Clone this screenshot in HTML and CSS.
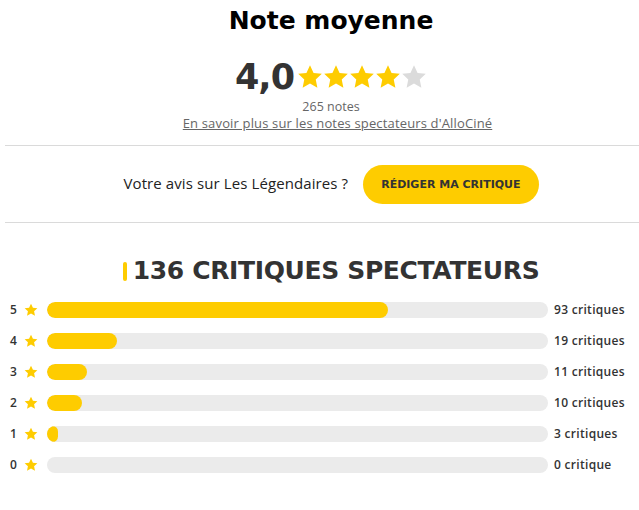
FILE: index.html
```html
<!DOCTYPE html>
<html lang="fr">
<head>
<meta charset="utf-8">
<link rel="stylesheet" href="styles.css">
</head>
<body>
<svg width="0" height="0" class="defs">
  <defs>
    <symbol id="star" viewBox="0 0 24 24"><path d="M12 1.2l3.3 7 7.6.9-5.6 5.2 1.5 7.6L12 18.1l-6.8 3.8 1.5-7.6L1.1 9.1l7.6-.9z"/></symbol>
  </defs>
</svg>
<main class="page">
  <section class="average">
    <h2 class="title">Note moyenne</h2>
    <div class="score">
      <span class="score-value">4,0</span>
      <span class="score-stars">
        <svg class="big-star on"><use href="#star"/></svg>
        <svg class="big-star on"><use href="#star"/></svg>
        <svg class="big-star on"><use href="#star"/></svg>
        <svg class="big-star on"><use href="#star"/></svg>
        <svg class="big-star off"><use href="#star"/></svg>
      </span>
    </div>
    <div class="count">265 notes</div>
    <a class="more" href="#">En savoir plus sur les notes spectateurs d'AlloCiné</a>
  </section>
  <hr class="sep">
  <section class="cta">
    <span class="cta-text">Votre avis sur Les Légendaires ?</span>
    <a class="cta-btn" href="#">Rédiger ma critique</a>
  </section>
  <hr class="sep">
  <section class="reviews">
    <h2 class="reviews-title"><span class="mark"></span>136 critiques spectateurs</h2>
    <ul class="rows">
      <li class="row"><span class="num">5</span><svg class="mini-star"><use href="#star"/></svg><span class="track"><span class="fill" style="width:68%"></span></span><span class="lbl">93 critiques</span></li>
      <li class="row"><span class="num">4</span><svg class="mini-star"><use href="#star"/></svg><span class="track"><span class="fill" style="width:14%"></span></span><span class="lbl">19 critiques</span></li>
      <li class="row"><span class="num">3</span><svg class="mini-star"><use href="#star"/></svg><span class="track"><span class="fill" style="width:8%"></span></span><span class="lbl">11 critiques</span></li>
      <li class="row"><span class="num">2</span><svg class="mini-star"><use href="#star"/></svg><span class="track"><span class="fill" style="width:7%"></span></span><span class="lbl">10 critiques</span></li>
      <li class="row"><span class="num">1</span><svg class="mini-star"><use href="#star"/></svg><span class="track"><span class="fill" style="width:2.2%"></span></span><span class="lbl">3 critiques</span></li>
      <li class="row"><span class="num">0</span><svg class="mini-star"><use href="#star"/></svg><span class="track"><span class="fill" style="width:0%"></span></span><span class="lbl">0 critique</span></li>
    </ul>
  </section>
</main>
</body>
</html>
```
FILE: styles.css
```css
* { box-sizing: border-box; }
html, body { margin: 0; padding: 0; background: #fff; overflow: hidden; }
body { font-family: "Open Sans", "Liberation Sans", sans-serif; color: #333; }
.defs { position: absolute; width: 0; height: 0; }
.page { padding-left: 5px; width: 657px; }

.average { display: flex; flex-direction: column; align-items: center; padding-top: 5px; }
.title { margin: 0; font-family: "DejaVu Sans", sans-serif; font-weight: 700; font-size: 25px; line-height: 31px; color: #000; }
.score { display: flex; align-items: center; margin-top: 19px; height: 44px; }
.score-value { font-family: "DejaVu Sans", sans-serif; font-weight: 700; font-size: 35px; line-height: 44px; color: #333; letter-spacing: -1px; }
.score-stars { display: flex; margin-left: 3px; }
.big-star { width: 26px; height: 26px; }
.big-star.on { fill: #fecc00; }
.big-star.off { fill: #dbdbdb; }
.count { font-size: 12.5px; line-height: 16px; color: #666; margin-top: 0; }
.more { font-size: 13px; line-height: 16px; color: #666; text-decoration: underline; letter-spacing: 0.15px; margin-left: 13px; }

.sep { border: 0; border-top: 1px solid #dadada; margin: 0; }
.average + .sep { margin-top: 14px; }

.cta { display: flex; align-items: center; justify-content: center; gap: 15px; height: 76px; }
.cta-text { font-size: 15px; color: #222; margin-top: -2px; letter-spacing: 0.1px; }
.cta-btn { display: inline-flex; align-items: center; justify-content: center; height: 39px; padding: 0 18px; background: #fecc00; border-radius: 20px; font-family: "DejaVu Sans", sans-serif; font-weight: 700; font-size: 11px; text-transform: uppercase; color: #333; text-decoration: none; }

.reviews { padding-top: 35px; }
.reviews-title { display: flex; align-items: center; justify-content: center; margin: 0; font-family: "DejaVu Sans", sans-serif; font-weight: 700; font-size: 25px; line-height: 26px; text-transform: uppercase; color: #333; letter-spacing: -0.35px; }
.mark { width: 4px; height: 19px; background: #fecc00; border-radius: 2px; margin-right: 6px; }
.rows { list-style: none; margin: 10px 0 0; padding: 0; }
.row { display: flex; align-items: center; height: 31px; }
.num { width: 19px; padding-left: 5px; font-size: 12px; font-weight: 600; color: #333; }
.mini-star { width: 14px; height: 14px; fill: #fecc00; margin-right: 9px; }
.track { position: relative; width: 501px; height: 16px; background: #ebebeb; border-radius: 8px; overflow: hidden; }
.fill { position: absolute; left: 0; top: 0; bottom: 0; background: #fecc00; border-radius: 8px; }
.lbl { margin-left: 6px; font-size: 12px; font-weight: 600; color: #333; letter-spacing: 0.3px; }
```
